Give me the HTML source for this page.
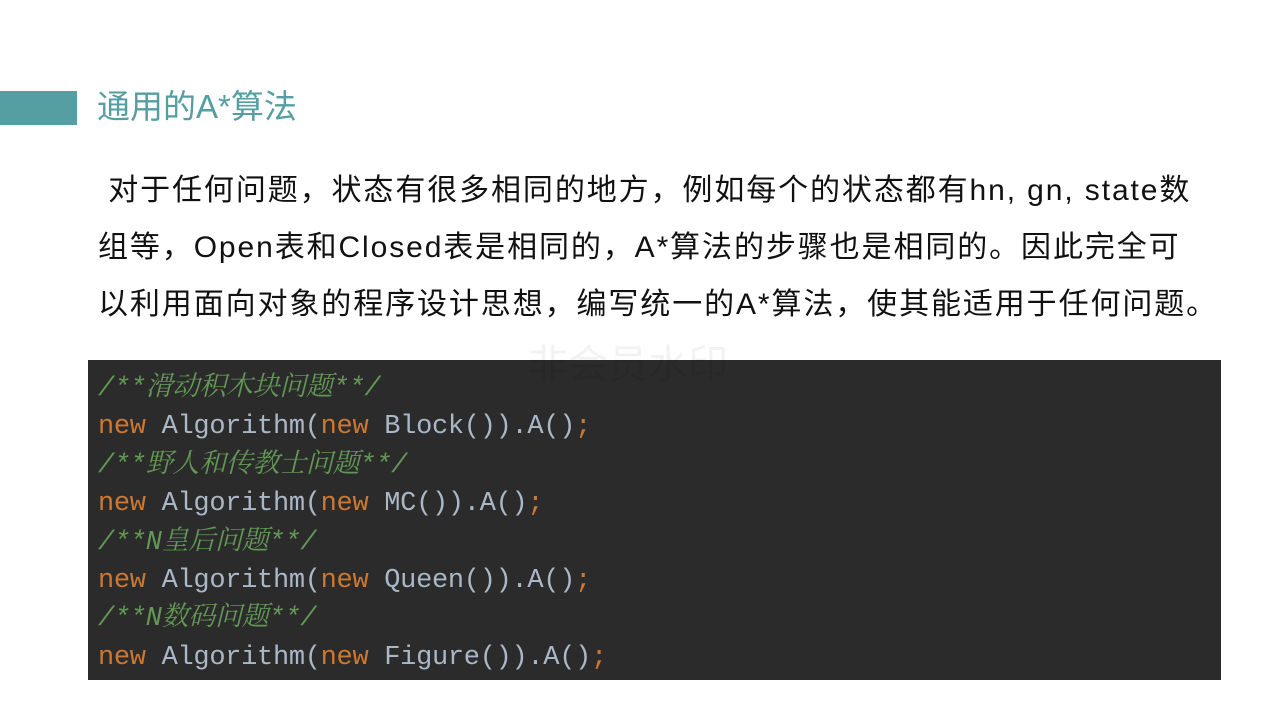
<!DOCTYPE html>
<html><head><meta charset="utf-8"><style>
body{margin:0;width:1280px;height:720px;background:#fff;position:relative;overflow:hidden;font-family:"Liberation Sans","Noto Sans CJK SC",sans-serif}
.bar{position:absolute;left:0;top:91px;width:77px;height:34px;background:#559ea2}
.title{position:absolute;left:97px;top:86px;font-size:33px;color:#559ea2;line-height:42px}
.p{position:absolute;left:98px;top:162px;font-size:30px;letter-spacing:1.9px;line-height:57px;color:#111;white-space:nowrap}
.code{position:absolute;left:88px;top:360px;width:1133px;height:320px;background:#2b2b2b;font-family:"Liberation Mono","Noto Serif CJK SC",monospace;font-size:27px;line-height:38.4px;padding-top:10px;box-sizing:border-box;padding-left:10px;white-space:pre;letter-spacing:-0.3px}
.c{color:#629755;font-style:italic}
.k{color:#cc7832}.t{color:#a9b7c6}
.wm{position:absolute;left:528px;top:332px;font-size:40px;color:rgba(0,0,0,0.05);font-family:"Noto Sans CJK SC",sans-serif}
</style></head><body>
<div class="bar"></div>
<div class="title">通用的A*算法</div>
<div class="p">&nbsp;对于任何问题，状态有很多相同的地方，例如每个的状态都有hn, gn, state数<br>组等，Open表和Closed表是相同的，A*算法的步骤也是相同的。因此完全可<br>以利用面向对象的程序设计思想，编写统一的A*算法，使其能适用于任何问题。</div>
<div class="code"><span class="c">/**滑动积木块问题**/</span>
<span class="k">new</span><span class="t"> Algorithm(</span><span class="k">new</span><span class="t"> Block()).A()</span><span class="k">;</span>
<span class="c">/**野人和传教士问题**/</span>
<span class="k">new</span><span class="t"> Algorithm(</span><span class="k">new</span><span class="t"> MC()).A()</span><span class="k">;</span>
<span class="c">/**N皇后问题**/</span>
<span class="k">new</span><span class="t"> Algorithm(</span><span class="k">new</span><span class="t"> Queen()).A()</span><span class="k">;</span>
<span class="c">/**N数码问题**/</span>
<span class="k">new</span><span class="t"> Algorithm(</span><span class="k">new</span><span class="t"> Figure()).A()</span><span class="k">;</span></div>
<div class="wm">非会员水印</div>
</body></html>
